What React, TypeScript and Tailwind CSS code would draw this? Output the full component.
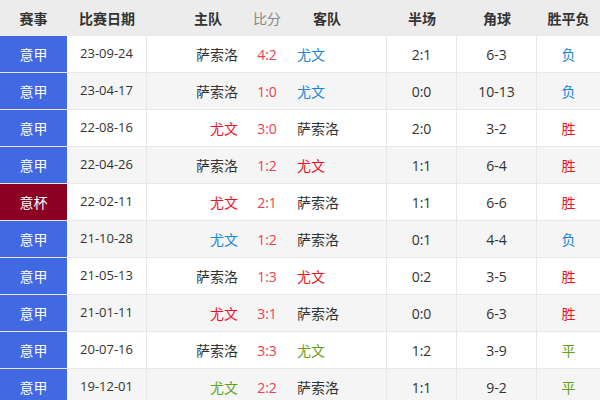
import React from "react";

type Row = {
  lg: string;
  cup?: boolean;
  date: string;
  home: string;
  homeC?: string;
  score: string;
  away: string;
  awayC?: string;
  half: string;
  corner: string;
  res: string;
  resC: string;
};

const BLUE = "text-[#1787d6]";
const RED = "text-[#f00f1e]";
const GREEN = "text-[#66a016]";
const DARK = "text-[#333333]";

const rows: Row[] = [
  { lg: "意甲", date: "23-09-24", home: "萨索洛", score: "4:2", away: "尤文", awayC: BLUE, half: "2:1", corner: "6-3", res: "负", resC: BLUE },
  { lg: "意甲", date: "23-04-17", home: "萨索洛", score: "1:0", away: "尤文", awayC: BLUE, half: "0:0", corner: "10-13", res: "负", resC: BLUE },
  { lg: "意甲", date: "22-08-16", home: "尤文", homeC: RED, score: "3:0", away: "萨索洛", half: "2:0", corner: "3-2", res: "胜", resC: RED },
  { lg: "意甲", date: "22-04-26", home: "萨索洛", score: "1:2", away: "尤文", awayC: RED, half: "1:1", corner: "6-4", res: "胜", resC: RED },
  { lg: "意杯", cup: true, date: "22-02-11", home: "尤文", homeC: RED, score: "2:1", away: "萨索洛", half: "1:1", corner: "6-6", res: "胜", resC: RED },
  { lg: "意甲", date: "21-10-28", home: "尤文", homeC: BLUE, score: "1:2", away: "萨索洛", half: "0:1", corner: "4-4", res: "负", resC: BLUE },
  { lg: "意甲", date: "21-05-13", home: "萨索洛", score: "1:3", away: "尤文", awayC: RED, half: "0:2", corner: "3-5", res: "胜", resC: RED },
  { lg: "意甲", date: "21-01-11", home: "尤文", homeC: RED, score: "3:1", away: "萨索洛", half: "0:0", corner: "6-3", res: "胜", resC: RED },
  { lg: "意甲", date: "20-07-16", home: "萨索洛", score: "3:3", away: "尤文", awayC: GREEN, half: "1:2", corner: "3-9", res: "平", resC: GREEN },
  { lg: "意甲", date: "19-12-01", home: "尤文", homeC: GREEN, score: "2:2", away: "萨索洛", half: "1:1", corner: "9-2", res: "平", resC: GREEN },
];

const font = { fontFamily: '"Open Sans", "Noto Sans CJK SC", sans-serif' };

export default function App() {
  return (
    <div
      className="w-[600px] h-[400px] overflow-hidden bg-white text-[14px] text-[#333333]"
      style={font}
    >
      <div className="grid grid-cols-[67px_80px_100px_40px_100px_70px_80px_63px] h-[36px] bg-[#ececec] items-center font-bold text-[#333333]">
        <div className="text-center">赛事</div>
        <div className="text-center">比赛日期</div>
        <div className="text-right pr-[25px]">主队</div>
        <div className="text-center font-normal text-[#888888]">比分</div>
        <div className="text-left pl-[26px]">客队</div>
        <div className="text-center">半场</div>
        <div className="text-center">角球</div>
        <div className="text-center">胜平负</div>
      </div>
      {rows.map((r, i) => (
        <div
          key={i}
          className={`grid grid-cols-[67px_80px_100px_40px_100px_70px_80px_63px] h-[37px] border-b border-[#e8e8e8] ${
            i % 2 === 1 ? "bg-[#f5f5f5]" : "bg-white"
          }`}
        >
          <div
            className={`flex items-center justify-center text-white ${
              r.cup ? "bg-[#8c0021]" : "bg-[#4169e1]"
            }`}
          >
            {r.lg}
          </div>
          <div className="flex items-center justify-center border-r border-[#e8e8e8] text-[13px]">
            {r.date}
          </div>
          <div className={`flex items-center justify-end pr-[9px] ${r.homeC ?? DARK}`}>
            {r.home}
          </div>
          <div className="flex items-center justify-center text-[#ee3e50]">{r.score}</div>
          <div
            className={`flex items-center justify-start pl-[10px] border-r border-[#e8e8e8] ${r.awayC ?? DARK}`}
          >
            {r.away}
          </div>
          <div className="flex items-center justify-center border-r border-[#e8e8e8]">{r.half}</div>
          <div className="flex items-center justify-center border-r border-[#e8e8e8]">{r.corner}</div>
          <div className={`flex items-center justify-center ${r.resC}`}>{r.res}</div>
        </div>
      ))}
    </div>
  );
}
